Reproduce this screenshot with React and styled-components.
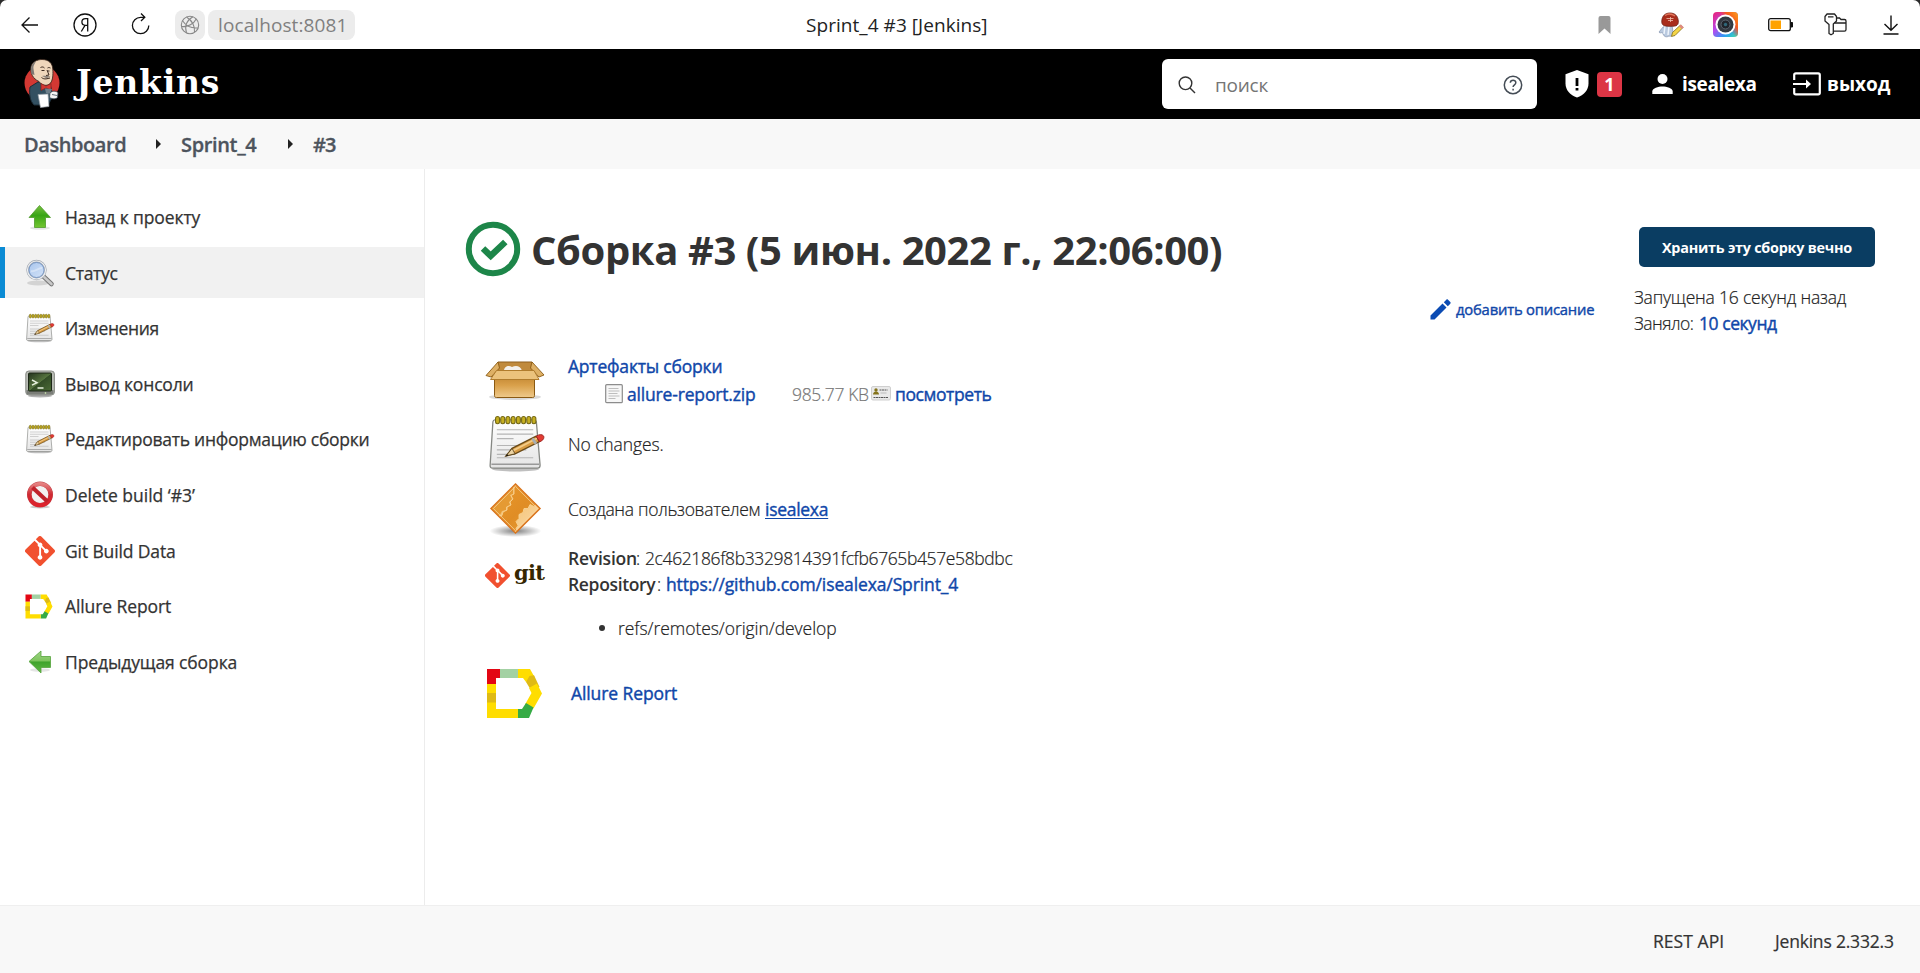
import React from "react";
import styled, { createGlobalStyle } from "styled-components";

const GlobalStyle = createGlobalStyle`
  *, *::before, *::after { box-sizing: border-box; }
  body { margin: 0; background: #2b2b2b; overflow: hidden; }
  svg { display: block; flex: none; }
  a { text-decoration: none; color: inherit; }
`;

const Page = styled.div`
  width: 1920px;
  height: 973px;
  display: flex;
  flex-direction: column;
  background: #fff;
  border-radius: 7px 7px 0 0;
  overflow: hidden;
  color: #333;
  font-family: "Open Sans", "Noto Sans", sans-serif;
  font-size: 17.5px;
`;

const Text = styled.span`
  display: block;
  flex: none;
  white-space: nowrap;
  width: ${(p) => (p.$w ? `${p.$w}px` : "auto")};
  font-size: ${(p) => p.$size || 17.5}px;
  font-weight: ${(p) => p.$weight || 400};
  letter-spacing: ${(p) => p.$ls || 0}px;
  color: ${(p) => p.$color || "inherit"};
`;

const Light = styled(Text).attrs({ $weight: 300 })`
  color: ${(p) => p.$color || "#222"};
  -webkit-text-stroke: 0.2px currentColor;
`;

const Link = styled(Text).attrs({ as: "a", href: "#" })`
  color: #1047a9;
  -webkit-text-stroke: 0.4px currentColor;
  text-decoration: ${(p) => (p.$underline ? "underline" : "none")};
  text-underline-offset: 2px;
  text-decoration-thickness: 1px;
`;

/* Browser bar */
const BrowserBar = styled.div`
  flex: none;
  height: 49px;
  display: flex;
  align-items: center;
  padding: 0 21px 0 21px;
`;
const NavIcons = styled.div`
  display: flex;
  align-items: center;
  gap: 34px;
  width: 154px;
`;
const Tile = styled.div`
  flex: none;
  height: 30px;
  width: ${(p) => p.$w}px;
  margin-right: 3px;
  border-radius: 8px;
  background: #ececec;
  display: flex;
  align-items: center;
  justify-content: ${(p) => (p.$center ? "center" : "flex-start")};
  padding-left: ${(p) => (p.$center ? 0 : 10)}px;
`;
const PageTitle = styled.div`
  margin-left: 448px;
  flex: 1;
`;
const Extensions = styled.div`
  display: flex;
  align-items: center;
`;
const Slot = styled.div`
  margin-left: ${(p) => p.$gap || 0}px;
`;

/* Jenkins header */
const Header = styled.header`
  flex: none;
  height: 70px;
  background: #000;
  color: #fff;
  display: flex;
  align-items: center;
  padding: 0 30px 0 23px;
`;
const Logo = styled.div`
  display: flex;
  align-items: center;
  flex: 1;
`;
const LogoText = styled.span`
  font: 700 33px/40px "DejaVu Serif", serif;
  letter-spacing: 0.8px;
  margin: 0 0 2px 15px;
`;
const Search = styled.div`
  width: 375px;
  height: 50px;
  border-radius: 6px;
  background: #fff;
  display: flex;
  align-items: center;
  padding: 2px 14px 0 16px;
`;
const Placeholder = styled(Text)`
  flex: 1;
  margin: -1px 0 0 19px;
  color: #757575;
`;
const Alerts = styled.div`
  display: flex;
  align-items: center;
  gap: 8px;
  margin-left: 28px;
`;
const Badge = styled.span`
  width: 25px;
  height: 25px;
  border-radius: 4px;
  background: #dc3545;
  font-weight: 700;
  font-size: 18px;
  line-height: 25px;
  text-align: center;
`;
const HeaderItem = styled.div`
  display: flex;
  align-items: center;
  margin-left: ${(p) => p.$ml}px;
  gap: ${(p) => p.$gap}px;
`;

/* Breadcrumbs */
const Breadcrumbs = styled.nav`
  flex: none;
  height: 50px;
  background: #f8f8f8;
  color: #4d545d;
  display: flex;
  align-items: center;
  padding-left: 24px;
  -webkit-text-stroke: 0.3px currentColor;
`;
const Caret = styled.i`
  border: 5px solid transparent;
  border-left: 5px solid #222;
  border-right: 0;
  margin: 0 ${(p) => p.$mr}px 0 ${(p) => p.$ml}px;
`;

/* Body */
const Body = styled.div`
  flex: 1;
  display: flex;
  min-height: 0;
`;
const Sidebar = styled.aside`
  width: 425px;
  flex: none;
  border-right: 1px solid #ececec;
  padding-top: 22.4px;
  display: flex;
  flex-direction: column;
  gap: 4.65px;
`;
const Task = styled.a`
  height: 51px;
  flex: none;
  display: flex;
  align-items: center;
  gap: 10px;
  padding-left: 20px;
  border-left: 5px solid ${(p) => (p.$active ? "#0b8bd4" : "transparent")};
  background: ${(p) => (p.$active ? "#f1f1f1" : "transparent")};
  -webkit-text-stroke: 0.25px currentColor;
`;
const Main = styled.main`
  flex: 1;
  display: flex;
  justify-content: space-between;
  padding: 0 45px 0 40px;
`;
const Build = styled.section`
  display: flex;
  flex-direction: column;
`;
const TitleRow = styled.div`
  display: flex;
  align-items: center;
  height: 54px;
  margin-top: 53px;
  gap: 10px;
`;
const Heading = styled.h1`
  margin: 1px 0 0;
  font-size: 40px;
  line-height: 54px;
  font-weight: 700;
  letter-spacing: -0.4px;
  white-space: nowrap;
`;
const Summary = styled.div`
  margin: 75.3px 0 0 20px;
  display: flex;
  flex-direction: column;
`;
const Row = styled.div`
  display: flex;
  height: ${(p) => p.$h}px;
  align-items: ${(p) => (p.$top ? "flex-start" : "center")};
`;
const IconCell = styled.div`
  width: 63px;
  height: ${(p) => (p.$h ? `${p.$h}px` : "auto")};
  margin-right: ${(p) => p.$mr || 20}px;
  padding-left: ${(p) => p.$pl || 0}px;
  padding-top: ${(p) => p.$pt || 0}px;
  display: flex;
  align-items: center;
  flex: none;
`;
const Lines = styled.div`
  display: flex;
  flex-direction: column;
  line-height: ${(p) => p.$lh}px;
  padding-top: ${(p) => p.$pt || 0}px;
`;
const Line = styled.div`
  display: flex;
  align-items: center;
  padding-left: ${(p) => p.$pl || 0}px;
  margin-top: ${(p) => p.$mt || 0}px;
`;
const Bullet = styled.i`
  width: 6px;
  height: 6px;
  border-radius: 50%;
  background: #333;
  margin-right: 13px;
`;
const GitLogo = styled.div`
  display: flex;
  align-items: center;
  gap: 4px;
`;
const GitWord = styled.span`
  font: 700 21px/26px "DejaVu Serif", serif;
  letter-spacing: -0.7px;
  color: #362701;
  margin-top: -4px;
`;
const Side = styled.section`
  display: flex;
  gap: 40px;
`;
const AddDescription = styled.div`
  display: flex;
  align-items: center;
  height: 24px;
  margin-top: 128px;
  gap: 5px;
`;
const Meta = styled.div`
  display: flex;
  flex-direction: column;
  width: 241px;
  padding-top: 58px;
  line-height: 25.5px;
`;
const KeepButton = styled.button`
  width: 236px;
  height: 40px;
  margin: 0 0 18px 5px;
  padding: 0;
  border: 0;
  border-radius: 5px;
  background: #0a3d62;
  color: #fff;
  display: flex;
  align-items: center;
  justify-content: center;
  font-family: inherit;
`;
const Footer = styled.footer`
  flex: none;
  height: 68px;
  background: #f8f8f8;
  border-top: 1px solid #efefef;
  display: flex;
  align-items: center;
  justify-content: flex-end;
  padding: 3px 24px 0 0;
  gap: 51px;
  -webkit-text-stroke: 0.2px currentColor;
`;

/* Icons */
const Svg = ({ w, h = w, vb, children, ...rest }) => (
  <svg width={w} height={h} viewBox={vb || `0 0 ${w} ${h}`} fill="none" {...rest}>
    {children}
  </svg>
);

const BackIcon = () => (
  <Svg w={18} h={24} stroke="#111" strokeWidth="1.3">
    <path d="M17 12H1M8.5 4.500L1 12l7.500 7.500" />
  </Svg>
);
const YandexIcon = () => (
  <Svg w={24} stroke="#111" strokeWidth="1.3">
    <circle cx="12" cy="12" r="11" />
    <path d="M14.700 18.500V5.700h-2.200c-2.300 0-3.600 1.400-3.600 3.400 0 2 1.300 3.200 3.600 3.200h2.200M12 12.300l-3.700 6.200" />
  </Svg>
);
const ReloadIcon = () => (
  <Svg w={20} h={24} stroke="#111" strokeWidth="1.3">
    <path d="M17.800 12.500A8.200 8.200 0 1 1 9.600 4.300h4M10 .5L13.800 4.300 10 8" />
  </Svg>
);
const GlobeIcon = () => (
  <Svg w={20} stroke="#888" strokeWidth="1.1">
    <circle cx="10" cy="10" r="8.700" />
    <path d="M13 1.800C7 5 4.500 11 6.500 18M2.500 5.800C6 11 11.500 13.500 18 13M1.500 11.500C8 12.500 14 8.500 16.200 4M6.500 2c5.500 3.500 8.500 9 8 15.200" />
  </Svg>
);
const BookmarkIcon = () => (
  <Svg w={13} h={20}>
    <path d="M.5 3a2 2 0 0 1 2-2h8a2 2 0 0 1 2 2v16l-6-5.500L.5 19z" fill="#999" />
  </Svg>
);
const MushroomIcon = () => (
  <Svg w={26}>
    <path d="M7 14c-3 1-4 4-6 6 1 2 2 0 4 1 0 3 3 5 6 3 2 1 4-1 4-4l-1-7z" fill="#b9c9df" stroke="#8292ad" strokeWidth=".7" />
    <path d="M7 14l-1 8M11 14l-1 9" stroke="#eef4fb" strokeWidth="1.500" />
    <path d="M3.800 9C4 4 7 1 12 1c5 0 8 3 8.300 8 .2 4-1 5.500-8.300 5.300C5.500 14.300 3.500 13 3.800 9z" fill="#a92d1c" stroke="#6d2115" strokeWidth=".8" />
    <path d="M7 3.500c3-2 7-1.500 10 .5" stroke="#e2755b" strokeWidth="1.500" />
    <path d="M8.500 6.500h7M10 8.500h5M12.500 5v5" stroke="#f2c0ad" strokeWidth=".8" />
    <path d="M13.500 24.500l1-4 8-7.500 2.500 2.500-8 8z" fill="#f4d546" stroke="#806c1c" strokeWidth=".8" />
    <path d="M21 14.300l2-1.700 2.700 2.600-1.900 1.900z" fill="#e08a82" />
  </Svg>
);
const CameraIcon = () => (
  <Svg w={25}>
    <defs>
      <linearGradient id="camA" x1="0" y1="0" x2="1" y2="1">
        <stop offset="0" stopColor="#ee1f70" />
        <stop offset=".4" stopColor="#b44bef" />
        <stop offset=".7" stopColor="#2a9bf5" />
        <stop offset="1" stopColor="#3ee8a2" />
      </linearGradient>
      <linearGradient id="camB" x1=".2" y1=".6" x2="1" y2="0">
        <stop offset=".3" stopColor="#f82c5c" stopOpacity="0" />
        <stop offset=".6" stopColor="#f8581d" />
        <stop offset="1" stopColor="#fba31b" />
      </linearGradient>
    </defs>
    <rect width="25" height="25" rx="4" fill="url(#camA)" />
    <rect width="25" height="25" rx="4" fill="url(#camB)" />
    <circle cx="12.500" cy="12.500" r="10" fill="#fff" />
    <circle cx="12.500" cy="12.500" r="8" fill="#353a42" />
    <circle cx="12.500" cy="12.500" r="4.500" fill="#20242b" stroke="#5c6570" />
    <circle cx="12.500" cy="12.500" r="1.700" fill="#2f6679" />
  </Svg>
);
const BatteryIcon = () => (
  <Svg w={26} h={14}>
    <rect x=".7" y=".7" width="21.600" height="12" rx="2" stroke="#111" strokeWidth="1.300" />
    <rect x="2.500" y="2.500" width="10.500" height="8.500" fill="#ffa200" />
    <path d="M23 4.500h1.500v4.500H23z" fill="#111" stroke="#111" />
  </Svg>
);
const KeyIcon = () => (
  <Svg w={23} h={23} stroke="#222" strokeWidth="1.300">
    <path d="M3 1h7.500L12.500 3.500v4.500L9.300 11v9.500L7 21.800 5 20.500v-9L1 8V3.500z" strokeLinejoin="round" />
    <path d="M4 3.800h5.500M12.500 5h3l1.500 1.500h3.500c1 0 1.500.5 1.500 1.500v8.500c0 1-.5 1.700-1.500 1.700H9.500M10.500 10H22" />
  </Svg>
);
const DownloadIcon = () => (
  <Svg w={16} h={20} stroke="#111" strokeWidth="1.400">
    <path d="M8 .5v14.500M1.500 9L8 15.300 14.500 9M.5 19h15" />
  </Svg>
);

const ButlerIcon = () => (
  <Svg w={38} h={52}>
    <circle cx="19" cy="25" r="17.500" fill="#d33833" />
    <path d="M7 29l8-5 12 2 3 12-5 9H11c-4-4-5-11-4-18z" fill="#335061" stroke="#1c2d38" />
    <path d="M8 9C9 4 14 1.500 19 1.500c7 0 10.500 4 10.800 9.500.5 6 0 13-3.800 15.500-4 2-8 0-10-3C10 21 7 15 8 9z" fill="#efd6bb" stroke="#3c2a20" strokeWidth=".9" />
    <path d="M8.500 16C7 10 9 5 13 3c-1 3-3 4-2.500 8l1 6z" fill="#7e7974" />
    <path d="M17.500 9.500c2-1 3-.5 4 .5M24.500 10c1-.7 2-.5 3 0M18.500 12.500h3M24.500 13h2M24 12l2 5-3 .5M18.500 19.500c3 2.500 6 1 8.500.5" stroke="#3c2a20" strokeWidth="1" />
    <path d="M19 18c3-.5 6 0 8.500.5l-4 1.800z" fill="#8c827a" />
    <path d="M18 25.500l5 2.500 5-2.500v6.500l-5-2-5 2.500z" fill="#d33833" stroke="#81221f" strokeWidth=".7" />
    <path d="M22 30.500l7 .5-2 5-4-1z" fill="#6d7f8b" />
    <path d="M15 36.500l10-.5 1 12.500-8.500 1z" fill="#fff" stroke="#98a1a8" strokeWidth=".7" />
    <path d="M27 35c2-2 5-2.500 8-.5l-.5 5c-3 2.500-6 1-8 0z" fill="#f4f4f4" stroke="#32424d" strokeWidth=".8" />
    <path d="M29 36.500l5 1" stroke="#65727b" />
  </Svg>
);
const SearchIcon = () => (
  <Svg w={18} stroke="#333" strokeWidth="1.400">
    <circle cx="7.500" cy="7.300" r="6.300" />
    <path d="M12 12l5 5" />
  </Svg>
);
const HelpIcon = () => (
  <Svg w={20} stroke="#444c55" strokeWidth="1.500">
    <circle cx="10" cy="10" r="8.700" />
    <path d="M7.300 7.800c.2-3.400 5.600-3.400 5.500 0 0 2-2.700 2-2.700 4.200" />
    <path d="M10.100 13.700v1.700" />
  </Svg>
);
const ShieldIcon = () => (
  <Svg w={24} h={28}>
    <path d="M12 0l11.500 4.300v9.200c0 6.500-4.500 11.500-11.500 14C5 25 .5 20 .5 13.500V4.300z" fill="#fff" />
    <path d="M10.600 8h2.800v8h-2.800zM10.600 18h2.800v2.600h-2.800z" fill="#000" />
  </Svg>
);
const PersonIcon = () => (
  <Svg w={21} h={20}>
    <circle cx="10.500" cy="5" r="5" fill="#fff" />
    <path d="M.3 20v-2.500c0-3.500 6-5 10.200-5s10.200 1.500 10.200 5V20z" fill="#fff" />
  </Svg>
);
const ExitIcon = () => (
  <Svg w={28} h={24} stroke="#fff" strokeWidth="2.200">
    <path d="M1.200 8V3c0-1 .5-1.600 1.600-1.600h22.400c1 0 1.600.6 1.600 1.600v17.800c0 1-.6 1.600-1.600 1.600H2.800c-1 0-1.600-.6-1.600-1.600V16M0 12h15" />
    <path d="M13 7.500l5 4.500-5 4.500z" fill="#fff" stroke="none" />
  </Svg>
);

const ArrowIcon = ({ left }) => (
  <Svg w={30}>
    <defs>
      <linearGradient id="greenArrow" x1="0" y1="0" x2="0" y2="1">
        <stop offset="0" stopColor="#7ac143" />
        <stop offset=".45" stopColor="#39a516" />
        <stop offset="1" stopColor="#73c631" />
      </linearGradient>
      <linearGradient id="greenArrowLeft" x1="0" y1="0" x2="0" y2="1">
        <stop offset="0" stopColor="#a0d488" />
        <stop offset=".45" stopColor="#7dc45c" />
        <stop offset=".5" stopColor="#3fa32b" />
        <stop offset="1" stopColor="#61b944" />
      </linearGradient>
    </defs>
    <ellipse cx="15" cy={left ? 23 : 26} rx="10" ry="1.800" fill="#000" opacity=".1" />
    {left ? (
      <path d="M4 14.500L16 4v5.500h9.500v11H16V26z" fill="url(#greenArrowLeft)" stroke="#55a33c" strokeWidth=".8" />
    ) : (
      <path d="M14.500 3.500L25.500 15.500h-5v10h-11v-10H4z" fill="url(#greenArrow)" stroke="#4f9a2c" strokeWidth=".8" />
    )}
  </Svg>
);
const LensIcon = () => (
  <Svg w={30}>
    <defs>
      <linearGradient id="lens" x1="0" y1="0" x2="1" y2="1">
        <stop offset="0" stopColor="#a5c3ec" />
        <stop offset="1" stopColor="#d7e5f8" />
      </linearGradient>
    </defs>
    <ellipse cx="13" cy="25" rx="11" ry="2.500" fill="#000" opacity=".12" />
    <path d="M18 18l8.500 8" stroke="#777" strokeWidth="4.600" strokeLinecap="round" />
    <path d="M18 18l8.500 8" stroke="#c9c9c9" strokeWidth="2.600" strokeLinecap="round" />
    <circle cx="11.500" cy="12" r="9" fill="url(#lens)" stroke="#a2a8b0" strokeWidth="2.400" />
    <circle cx="11.500" cy="12" r="9" stroke="#eef0f3" strokeWidth="1.200" />
    <circle cx="11.500" cy="12" r="7.500" stroke="#6a8cbd" strokeWidth=".8" />
    <path d="M6 13c3 1.500 8-3.500 11-3" stroke="#fff" strokeWidth="2" opacity=".35" />
  </Svg>
);
const NotepadIcon = ({ size = 30 }) => (
  <Svg w={size} vb="0 0 60 60">
    <defs>
      <linearGradient id="paper" x1="0" y1="0" x2="0" y2="1">
        <stop offset="0" stopColor="#fff" />
        <stop offset="1" stopColor="#e4e4e4" />
      </linearGradient>
    </defs>
    <ellipse cx="29" cy="56" rx="24" ry="2.500" fill="#000" opacity=".25" />
    <path d="M8 6h40c1.500 0 2 .8 2.200 2L54 52c0 2-.6 3-2.500 3h-46C4 55 3 54 3.200 52L6 8c.2-1.300.7-2 2-2z" fill="url(#paper)" stroke="#858783" strokeWidth="1.300" />
    <path d="M4.500 51h48.500" stroke="#999" strokeWidth="1.500" />
    <path d="M10 16h37M10 20.500h37M10 25h17M10 32h28M10 36.500h30M10 41h13M10 44.500h37" stroke="#b5b5b5" strokeWidth="1.200" />
    {[11, 16.3, 21.600, 26.900, 32.200, 37.500, 42.800, 48].map((x) => (
      <rect key={x} x={x - 2.300} y="2.500" width="4" height="7.500" rx="2" fill="#c5af21" stroke="#756814" strokeWidth="1.100" />
    ))}
    <path d="M19.500 42.500l6-7.500L50 22.500l3.500 5.500-25 12.500z" fill="#d99c43" stroke="#6b4a16" strokeWidth="1.400" />
    <path d="M26 37.500l25-12.800" stroke="#f2cb88" strokeWidth="1.800" />
    <path d="M19.500 42.500l6-7.500 3 5.500z" fill="#ecd3a2" stroke="#4f3b17" strokeWidth=".8" />
    <path d="M47.500 24.200l3.500 5.300-2.500 1.500-3.400-5.500z" fill="#a9adb0" />
    <path d="M50 22.600c3-2 6-2.200 7.500-.3 1 2.200-.3 4.500-4 6z" fill="#e23b32" stroke="#9c2320" />
    <path d="M18.800 43.300l1.700-2.300 1.300 1.300z" fill="#111" />
  </Svg>
);
const TerminalIcon = () => (
  <Svg w={30}>
    <defs>
      <linearGradient id="screen" x1="0" y1="0" x2="1" y2="1">
        <stop offset="0" stopColor="#24331e" />
        <stop offset=".5" stopColor="#56743f" />
        <stop offset=".52" stopColor="#334d27" />
        <stop offset="1" stopColor="#4a6a35" />
      </linearGradient>
    </defs>
    <ellipse cx="15" cy="27" rx="12" ry="1.500" fill="#000" opacity=".3" />
    <rect x=".8" y="2" width="28.600" height="24" rx="3" fill="#b9bcb5" stroke="#888a85" />
    <path d="M1.500 21h27v2.500a2 2 0 0 1-2 2h-23a2 2 0 0 1-2-2z" fill="#7b7e78" />
    <rect x="3.500" y="4" width="23" height="18" rx="1" fill="url(#screen)" stroke="#1c2717" />
    <path d="M7 11l5 2.700-5 2.500M12.500 19h6" stroke="#e6f0de" strokeWidth="1.500" />
    <circle cx="20.500" cy="24" r=".8" fill="#d5f5b5" />
  </Svg>
);
const DeleteIcon = () => (
  <Svg w={30}>
    <defs>
      <linearGradient id="noEntry" x1="0" y1="0" x2="0" y2="1">
        <stop offset="0" stopColor="#e58080" />
        <stop offset=".5" stopColor="#cf2a33" />
        <stop offset="1" stopColor="#de222c" />
      </linearGradient>
    </defs>
    <ellipse cx="15" cy="27" rx="10" ry="1.500" fill="#000" opacity=".2" />
    <circle cx="15" cy="14.500" r="10.700" fill="#f3f1f1" stroke="#c0474c" strokeWidth="4.600" />
    <circle cx="15" cy="14.500" r="10.700" stroke="url(#noEntry)" strokeWidth="3.800" />
    <path d="M7.500 7.500l15 14" stroke="#c0222b" strokeWidth="4" />
  </Svg>
);
const GitIcon = ({ size = 30 }) => (
  <Svg w={size} vb="0 0 92 92">
    <path
      fill="#f1502f"
      d="M90.156 41.965L50.036 1.848a5.918 5.918 0 0 0-8.372 0l-8.328 8.332 10.566 10.566a7.030 7.030 0 0 1 7.230 1.684 7.034 7.034 0 0 1 1.669 7.277l10.187 10.184a7.028 7.028 0 0 1 7.278 1.672 7.040 7.040 0 0 1 0 9.957 7.050 7.050 0 0 1-9.965 0 7.044 7.044 0 0 1-1.528-7.660l-9.500-9.497V59.360a7.040 7.040 0 0 1 1.860 11.290 7.040 7.040 0 0 1-9.957 0 7.040 7.040 0 0 1 0-9.958 7.060 7.060 0 0 1 2.304-1.539V33.926a7.049 7.049 0 0 1-3.820-9.234L29.242 14.272 1.730 41.777a5.925 5.925 0 0 0 0 8.371L41.852 90.270a5.925 5.925 0 0 0 8.370 0l39.934-39.934a5.925 5.925 0 0 0 0-8.371"
    />
  </Svg>
);
const AllureIcon = ({ size = 30, w = 57, h = 51 }) => (
  <Svg w={size} h={(size * h) / w} vb="0 0 57 51">
    <path d="M1 1h13v9h-4v6H1z" fill="#e30613" />
    <path d="M14 1h18v9H14z" fill="#a3d1a3" />
    <path d="M32 1h12l4.500 8-8.500 5-3-4h-5z" fill="#ffdd00" />
    <path d="M43.500 8l4.500-.8L53.500 19l-8 4-5.500-9z" fill="#dfba15" />
    <path d="M51 15.500L56 25.500l-8.500 15-8.500-4L45.500 25l-2.500-5z" fill="#ffdd00" />
    <path d="M40 35l7.500 4.500L43 50H32v-9h4z" fill="#36ab45" />
    <path d="M1 16h9v25h22v9H1z" fill="#ffdd00" />
    <path d="M1 25h9v9.500H1z" fill="#dfba15" />
  </Svg>
);
const StatusIcon = () => (
  <Svg w={56}>
    <circle cx="28" cy="28" r="24.200" stroke="#1d8649" strokeWidth="6" />
    <path d="M18 27.500l7.700 7.300L40.300 21" stroke="#1d8649" strokeWidth="6.500" />
  </Svg>
);
const BoxIcon = () => (
  <Svg w={60} h={42}>
    <defs>
      <linearGradient id="carton" x1="0" y1="0" x2="0" y2="1">
        <stop offset="0" stopColor="#c58a35" />
        <stop offset=".4" stopColor="#d9a04a" />
        <stop offset="1" stopColor="#efca8c" />
      </linearGradient>
    </defs>
    <ellipse cx="30" cy="38" rx="26" ry="3" fill="#000" opacity=".15" />
    <path d="M13 3h34l4 10H9z" fill="#c08a3c" stroke="#8f5f1c" />
    <path d="M19 12c0-5 5-6 8-4 4-2 9-1 10 4z" fill="#f4f1ec" />
    <path d="M9.500 18h40v18.500c0 1.500-.7 2-2 2h-36c-1.300 0-2-.5-2-2z" fill="url(#carton)" stroke="#8a5a14" />
    <path d="M13 3L1 16.500l5 1.500 8.500-9z" fill="#deb065" stroke="#8a5a14" strokeWidth=".9" />
    <path d="M47 3l12 13-5 2-8.500-9z" fill="#deb065" stroke="#8a5a14" strokeWidth=".9" />
    <path d="M11.500 11.500h37.500L54 20.500H5.500z" fill="#ebc27c" stroke="#b07c2d" />
  </Svg>
);
const GearSignIcon = () => (
  <Svg w={60} h={58}>
    <defs>
      <linearGradient id="sign" x1="0" y1="0" x2="1" y2="1">
        <stop offset="0" stopColor="#e9982b" />
        <stop offset=".5" stopColor="#e08d25" />
        <stop offset="1" stopColor="#e9a23d" />
      </linearGradient>
      <linearGradient id="signGear" x1="0" y1="0" x2="1" y2="1">
        <stop offset="0" stopColor="#efb055" />
        <stop offset="1" stopColor="#fbdca8" />
      </linearGradient>
      <clipPath id="signClip">
        <path d="M30.500 5L54 28.500 30.500 52 7 28.500z" />
      </clipPath>
      <radialGradient id="signShadow">
        <stop offset="0" stopColor="#000" stopOpacity=".5" />
        <stop offset="1" stopColor="#000" stopOpacity="0" />
      </radialGradient>
    </defs>
    <ellipse cx="30.500" cy="51" rx="26" ry="6" fill="url(#signShadow)" />
    <path d="M30.500 4L55 28.500 30.500 53 6 28.500z" fill="url(#signGear)" stroke="#d9731b" strokeWidth="1.500" />
    <g clipPath="url(#signClip)">
      <path d="M28 0v14l-3 1 2 4-3 3 1 3-4 2v3l-4 1-2 4-5 1-8-4L20 4z" fill="#e59a33" />
      <path d="M29 4v10l-3 1.500 2 3.500-3 3 1 3-4 2v3l-4 2-1 3.500-4 1 14 14 6 2-2-4 2-3-2-4 3-3v-4l4-2 1-4 4 0 2-4 4 2 3-3 4 2 4-1z" fill="url(#sign)" stroke="#f8d191" strokeWidth=".9" />
    </g>
    <path d="M30.500 6.500L52.500 28.500 30.500 50.500 8.500 28.500z" stroke="#fad49b" strokeWidth=".7" />
  </Svg>
);
const FileIcon = () => (
  <Svg w={18} h={20}>
    <rect x=".7" y=".7" width="16.600" height="18" rx="1" fill="#f7f7f7" stroke="#8c8c8c" strokeWidth="1.200" />
    <path d="M3.500 4.500h10M3.500 7h11M3.500 9.500h9M3.500 12h11M3.500 14.500h7" stroke="#bdbdbd" />
  </Svg>
);
const CardIcon = () => (
  <Svg w={20} h={15}>
    <rect x=".5" y=".5" width="19" height="13.500" rx="1.500" fill="#e9e9e9" stroke="#cfcfcf" />
    <circle cx="5" cy="4" r="1.700" fill="#84731b" />
    <path d="M2 8.500c0-4 6-4 6 0z" fill="#84731b" />
    <path d="M8.500 4h8M2.500 11.500h15" stroke="#555" strokeDasharray="2 .5" />
    <path d="M9.500 7h6" stroke="#bbb" />
  </Svg>
);
const PencilIcon = () => (
  <Svg w={21}>
    <path d="M.5 16.500L12.500 4.500l4 4L4.500 20.500h-4zM13.800 3.200L16.300.7c.6-.5 1.200-.5 1.700 0l2.300 2.300c.5.500.5 1.100 0 1.700L17.800 7.200z" fill="#0b4bb3" />
  </Svg>
);

const tasks = [
  { icon: <ArrowIcon />, label: "Назад к проекту", ls: -0.12 },
  { icon: <LensIcon />, label: "Статус", ls: -0.3, active: true },
  { icon: <NotepadIcon />, label: "Изменения", ls: -0.38 },
  { icon: <TerminalIcon />, label: "Вывод консоли", ls: -0.16 },
  { icon: <NotepadIcon />, label: "Редактировать информацию сборки", ls: -0.26 },
  { icon: <DeleteIcon />, label: "Delete build ‘#3’", ls: -0.01 },
  { icon: <GitIcon />, label: "Git Build Data", ls: -0.13 },
  { icon: <AllureIcon size={28} />, label: "Allure Report", ls: -0.1 },
  { icon: <ArrowIcon left />, label: "Предыдущая сборка", ls: -0.11 },
];

const TaskIcon = styled.span`
  width: 30px;
  display: flex;
  justify-content: flex-start;
`;

export default function App() {
  return (
    <>
      <GlobalStyle />
      <Page>
        <BrowserBar>
          <NavIcons>
            <BackIcon />
            <YandexIcon />
            <ReloadIcon />
          </NavIcons>
          <Tile $w={30} $center><GlobeIcon /></Tile>
          <Tile $w={147}><Text $size={19} $ls={0.1} $color="#808080">localhost:8081</Text></Tile>
          <PageTitle><Text $size={19} $ls={0.05} $color="#222">Sprint_4 #3 [Jenkins]</Text></PageTitle>
          <Extensions>
            <BookmarkIcon />
            <Slot $gap={47}><MushroomIcon /></Slot>
            <Slot $gap={29}><CameraIcon /></Slot>
            <Slot $gap={30}><BatteryIcon /></Slot>
            <Slot $gap={30}><KeyIcon /></Slot>
            <Slot $gap={36}><DownloadIcon /></Slot>
          </Extensions>
        </BrowserBar>

        <Header>
          <Logo>
            <ButlerIcon />
            <LogoText>Jenkins</LogoText>
          </Logo>
          <Search>
            <SearchIcon />
            <Placeholder $size={19} $ls={-0.25}>поиск</Placeholder>
            <HelpIcon />
          </Search>
          <Alerts>
            <ShieldIcon />
            <Badge>1</Badge>
          </Alerts>
          <HeaderItem $ml={30} $gap={9}>
            <PersonIcon />
            <Text $w={75} $size={19} $weight={700} $ls={-0.35}>isealexa</Text>
          </HeaderItem>
          <HeaderItem $ml={36} $gap={6}>
            <ExitIcon />
            <Text $w={63} $size={19} $weight={700} $ls={-0.05}>выход</Text>
          </HeaderItem>
        </Header>

        <Breadcrumbs>
          <Text $w={102} $size={20} $weight={600} $ls={-0.43}>Dashboard</Text>
          <Caret $ml={30} $mr={20} />
          <Text $w={78} $size={20} $weight={600} $ls={-0.35}>Sprint_4</Text>
          <Caret $ml={29} $mr={20} />
          <Text $size={20} $weight={600} $ls={-0.8}>#3</Text>
        </Breadcrumbs>

        <Body>
          <Sidebar>
            {tasks.map((t) => (
              <Task key={t.label} href="#" $active={t.active}>
                <TaskIcon>{t.icon}</TaskIcon>
                <Text $ls={t.ls}>{t.label}</Text>
              </Task>
            ))}
          </Sidebar>
          <Main>
            <Build>
              <TitleRow>
                <StatusIcon />
                <Heading>Сборка #3 (5 июн. 2022 г., 22:06:00)</Heading>
              </TitleRow>
              <Summary>
                <Row $h={56.700}>
                  <IconCell><BoxIcon /></IconCell>
                  <Lines $lh={28}>
                    <Line><Link $ls={-0.2}>Артефакты сборки</Link></Line>
                    <Line $pl={37}>
                      <FileIcon />
                      <Slot $gap={4}><Link $w={165} $ls={-0.17}>allure-report.zip</Link></Slot>
                      <Light $w={79} $ls={-0.35} $color="#777">985.77 KB</Light>
                      <CardIcon />
                      <Slot $gap={4}><Link $ls={-0.4}>посмотреть</Link></Slot>
                    </Line>
                  </Lines>
                </Row>
                <Row $h={72}>
                  <IconCell $pl={2}><NotepadIcon size={59} /></IconCell>
                  <Light $ls={-0.1}>No changes.</Light>
                </Row>
                <Row $h={58}>
                  <IconCell><GearSignIcon /></IconCell>
                  <Light $w={197} $ls={-0.3}>Создана пользователем</Light>
                  <Link $underline $ls={-0.28}>isealexa</Link>
                </Row>
                <Row $h={122} $top>
                  <IconCell $h={74} $pt={1}>
                    <GitLogo><GitIcon size={25} /><GitWord>git</GitWord></GitLogo>
                  </IconCell>
                  <Lines $lh={26} $pt={7.200}>
                    <Line>
                      <Text $w={68} $weight={600} $ls={-0.22}>Revision</Text>
                      <Light $w={9}>:</Light>
                      <Light $ls={-0.38}>2c462186f8b3329814391fcfb6765b457e58bdbc</Light>
                    </Line>
                    <Line>
                      <Text $w={89} $weight={600} $ls={-0.34}>Repository</Text>
                      <Light $w={9}>:</Light>
                      <Link $ls={-0.12}>https://github.com/isealexa/Sprint_4</Link>
                    </Line>
                    <Line $mt={18} $pl={31}>
                      <Bullet />
                      <Light $ls={-0.06}>refs/remotes/origin/develop</Light>
                    </Line>
                  </Lines>
                </Row>
                <Row $h={66}>
                  <IconCell $mr={23} $pl={1} $pt={1}><AllureIcon size={57} /></IconCell>
                  <Link $ls={-0.1}>Allure Report</Link>
                </Row>
              </Summary>
            </Build>
            <Side>
              <AddDescription>
                <PencilIcon />
                <Link $w={138} $size={14.800} $ls={-0.2}>добавить описание</Link>
              </AddDescription>
              <Meta>
                <KeepButton><Text $size={14.400} $weight={700} $ls={-0.24}>Хранить эту сборку вечно</Text></KeepButton>
                <Light $ls={-0.19}>Запущена 16 секунд назад</Light>
                <Line>
                  <Light $w={65} $ls={-0.5}>Заняло:</Light>
                  <Link $ls={-0.45}>10 секунд</Link>
                </Line>
              </Meta>
            </Side>
          </Main>
        </Body>

        <Footer>
          <Text $w={71} $ls={0.05}>REST API</Text>
          <Text $w={121} $ls={-0.2}>Jenkins 2.332.3</Text>
        </Footer>
      </Page>
    </>
  );
}
